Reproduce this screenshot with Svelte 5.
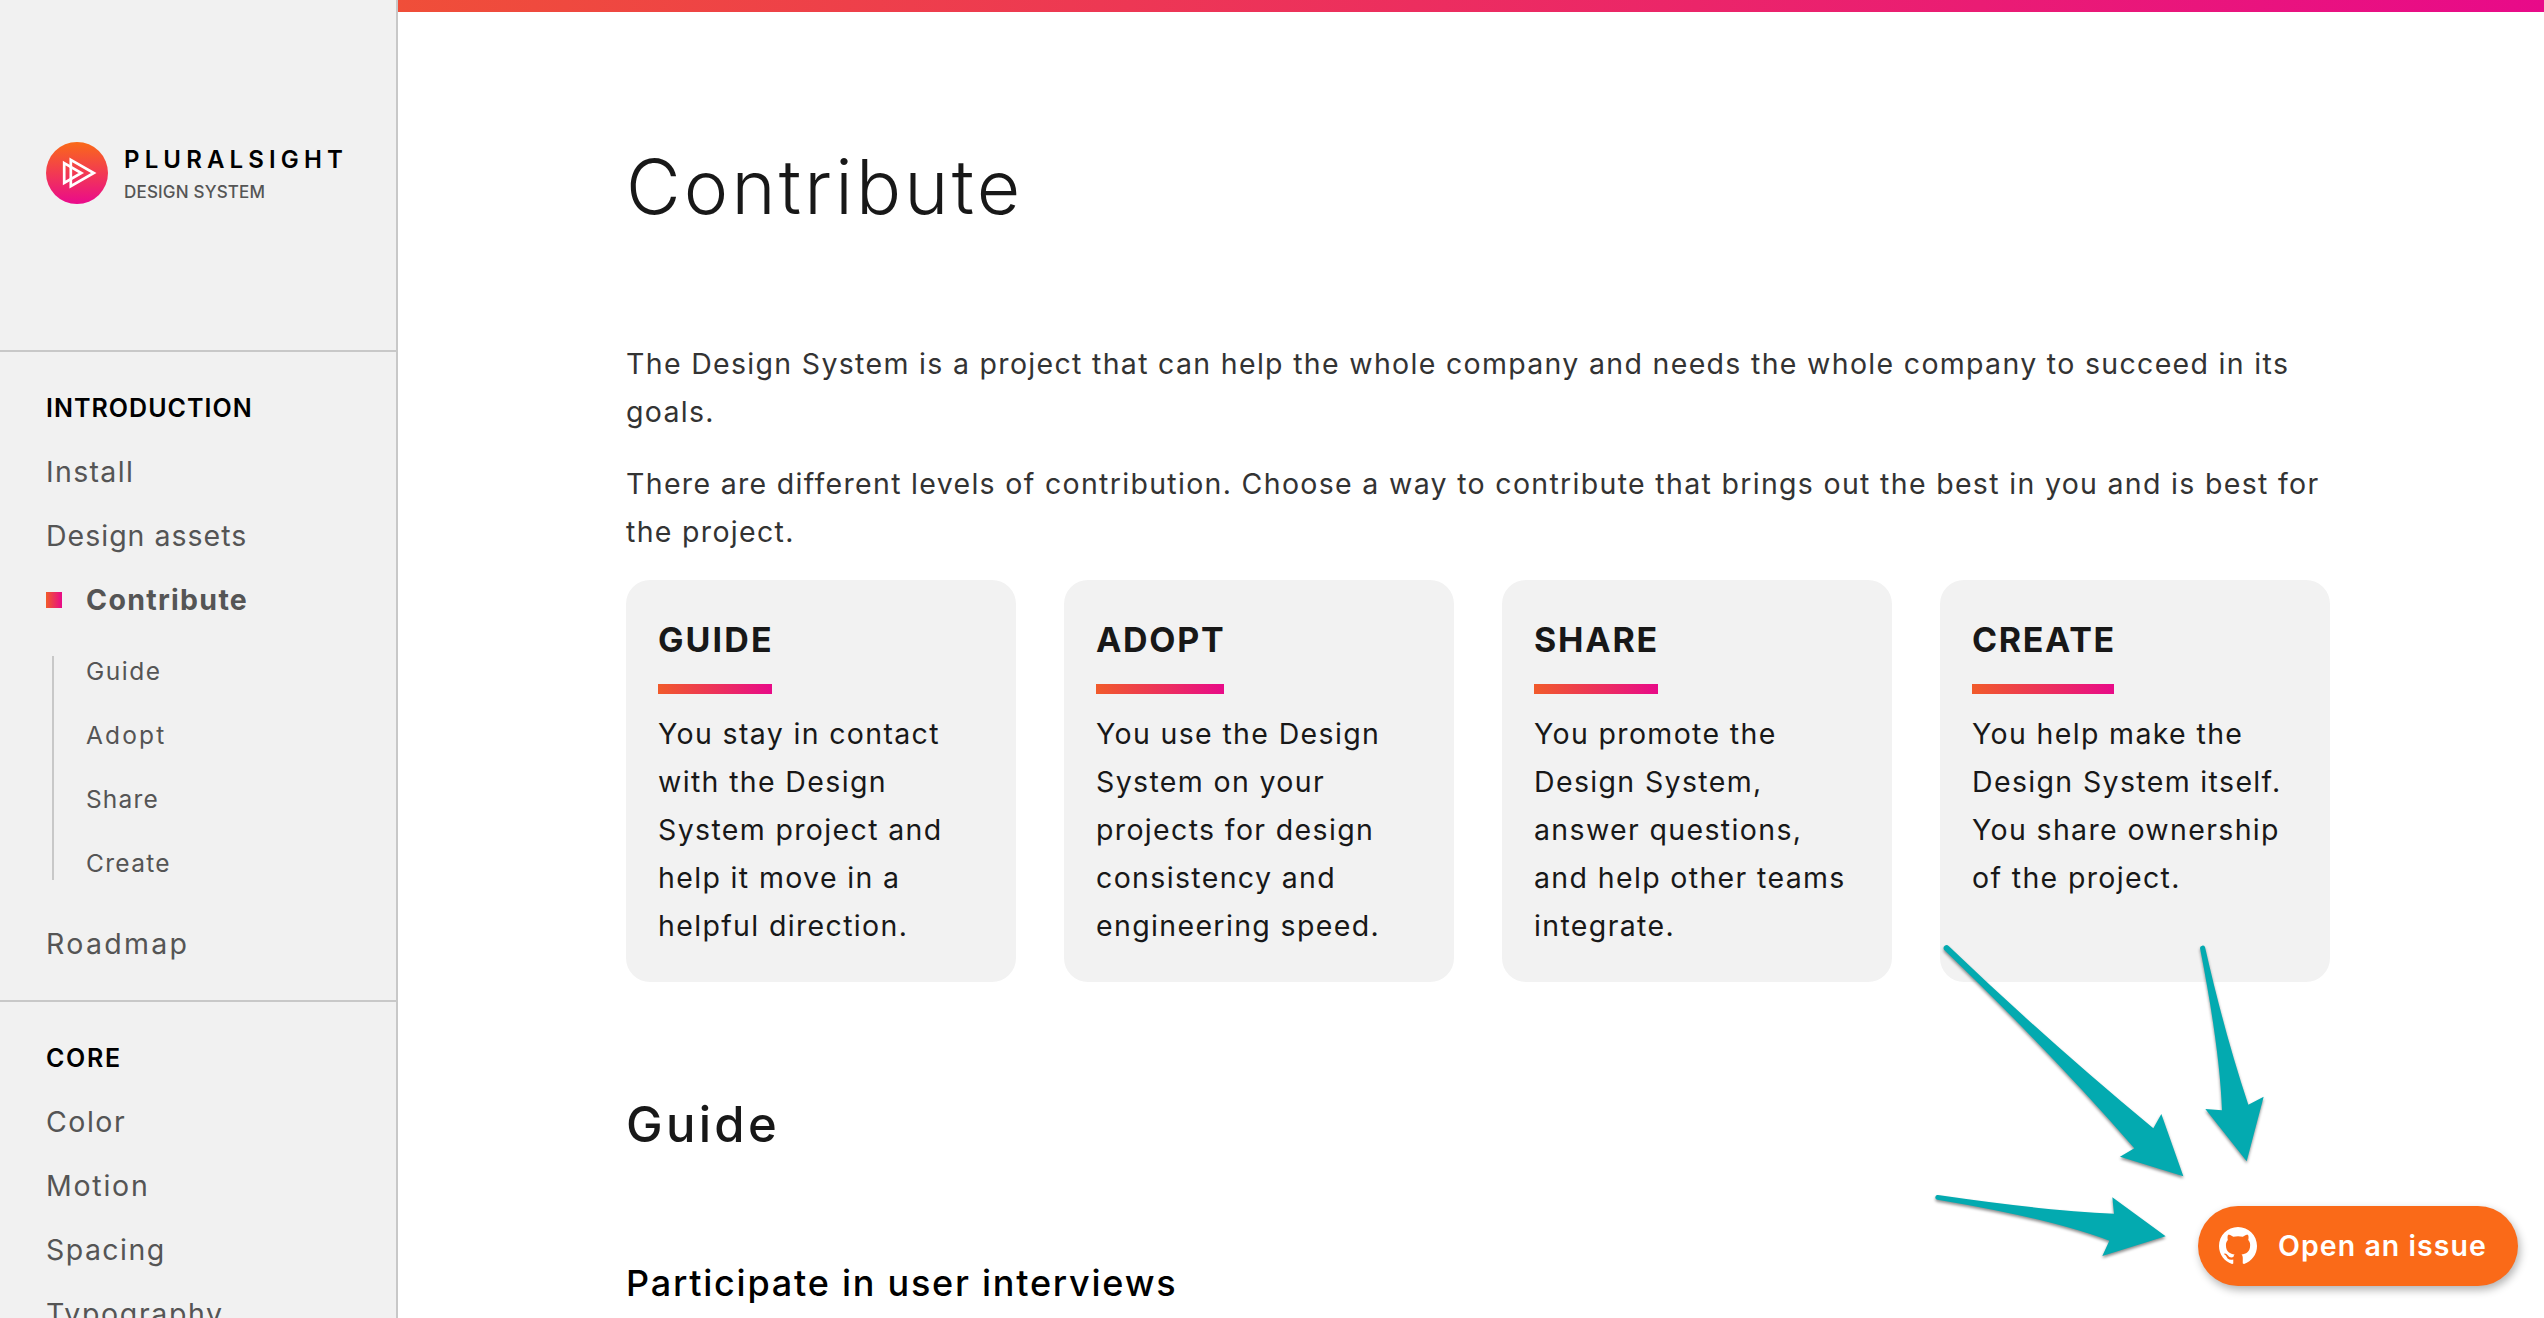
<script>
  // Navigation entries carry their own tracking (ls, in px).
  const intro = [
    { label: 'Install', ls: 1.34 },
    { label: 'Design assets', ls: 1.0 },
    {
      label: 'Contribute',
      ls: 1.3,
      active: true,
      children: [
        { label: 'Guide', ls: 1.5 },
        { label: 'Adopt', ls: 2.15 },
        { label: 'Share', ls: 1.15 },
        { label: 'Create', ls: 1.3 },
      ],
    },
    { label: 'Roadmap', ls: 2.3 },
  ];
  const core = [
    { label: 'Color', ls: 1.5 },
    { label: 'Motion', ls: 1.75 },
    { label: 'Spacing', ls: 1.45 },
    { label: 'Typography', ls: 1.65 },
  ];
  const sections = [
    { title: 'INTRODUCTION', ls: 1.03, items: intro },
    { title: 'CORE', ls: 1.65, items: core },
  ];
  const cards = [
    { title: 'GUIDE', ls: 2.1, text: 'You stay in contact with the Design System project and help it move in a helpful direction.' },
    { title: 'ADOPT', ls: 1.7, text: 'You use the Design System on your projects for design consistency and engineering speed.' },
    { title: 'SHARE', ls: 1.8, text: 'You promote the Design System, answer questions, and help other teams integrate.' },
    { title: 'CREATE', ls: 1.66, text: 'You help make the Design System itself. You share ownership of the project.' },
  ];
</script>

<div class="page">
  <aside>
    <header class="brand">
      <svg class="logo" viewBox="0 0 62 62" aria-hidden="true">
        <defs>
          <linearGradient id="disc" x1="0" y1="0" x2="0" y2="1">
            <stop offset="0" stop-color="#fa6a18" />
            <stop offset="1" stop-color="#ea0a8c" />
          </linearGradient>
        </defs>
        <circle cx="31" cy="31" r="31" fill="url(#disc)" />
        <g fill="none" stroke="#fff" stroke-width="2.7">
          <path d="M24.8 17.8 47.8 31 24.8 44.2Z" />
          <path d="M18.2 21.2 35.3 31 18.2 40.8Z" />
        </g>
      </svg>
      <div class="names">
        <span class="name">PLURALSIGHT</span>
        <span class="sub">DESIGN SYSTEM</span>
      </div>
    </header>
    {#each sections as section}
      <nav>
        <h4 style:letter-spacing="{section.ls}px">{section.title}</h4>
        {#each section.items as item}
          <a class="item" class:active={item.active} href="#top" style:letter-spacing="{item.ls}px">{item.label}</a>
          {#if item.children}
            <div class="children">
              {#each item.children as child}
                <a class="child" href="#top" style:letter-spacing="{child.ls}px">{child.label}</a>
              {/each}
            </div>
          {/if}
        {/each}
      </nav>
    {/each}
  </aside>

  <main>
    <div class="stripe"></div>
    <article>
      <h1>Contribute</h1>
      <p>The Design System is a project that can help the whole company and needs the whole company to succeed in its goals.</p>
      <p>There are different levels of contribution. Choose a way to contribute that brings out the best in you and is best for the project.</p>
      <div class="cards">
        {#each cards as card}
          <section class="card">
            <h3 style:letter-spacing="{card.ls}px"><span>{card.title}</span></h3>
            <div class="text">{card.text}</div>
          </section>
        {/each}
      </div>
      <h2>Guide</h2>
      <h5>Participate in user interviews</h5>
    </article>
  </main>

  <svg class="arrows" viewBox="0 0 1200 1080" aria-hidden="true">
    <path d="M146 78Q440 360 760 625L784 582 850 769 660 710 703 685Q460 405 132 89A9 9 0 0 1 146 78Z" />
    <path d="M915 81Q975 345 1045 554L1091 530 1040 724 916 567 966 571Q959 385 900 84A8 8 0 0 1 915 81Z" />
    <path d="M114 825Q450 874 642 881L637 832 797 949 607 1008 628 962Q450 895 112 839A7 7 0 0 1 114 825Z" />
  </svg>

  <button class="issue">
    <svg viewBox="0 0 16 16" aria-hidden="true">
      <path fill="#fff" d="M8 0C3.58 0 0 3.58 0 8c0 3.54 2.29 6.53 5.47 7.59.4.07.55-.17.55-.38 0-.19-.01-.82-.01-1.49-2.01.37-2.53-.49-2.69-.94-.09-.23-.48-.94-.82-1.13-.28-.15-.68-.52-.01-.53.63-.01 1.08.58 1.23.82.72 1.21 1.87.87 2.33.66.07-.52.28-.87.51-1.07-1.78-.2-3.64-.89-3.64-3.95 0-.87.31-1.59.82-2.15-.08-.2-.36-1.02.08-2.12 0 0 .67-.21 2.2.82.64-.18 1.32-.27 2-.27s1.36.09 2 .27c1.53-1.04 2.2-.82 2.2-.82.44 1.1.16 1.92.08 2.12.51.56.82 1.27.82 2.15 0 3.07-1.87 3.75-3.65 3.95.29.25.54.73.54 1.48 0 1.07-.01 1.93-.01 2.2 0 .21.15.46.55.38A8.01 8.01 0 0 0 16 8c0-4.42-3.58-8-8-8Z" />
    </svg>
    <span>Open an issue</span>
  </button>
</div>

<style>
  :global(body) {
    background: #fff;
    overflow: hidden;
  }
  .page {
    position: relative;
    display: flex;
    height: 1318px;
    overflow: hidden;
    font-family: Inter, 'Liberation Sans', sans-serif;
    color: #181818;
  }
  h1, h2, h3, h4, h5, p {
    margin: 0;
  }
  aside {
    box-sizing: border-box;
    width: 398px;
    flex: none;
    background: #f1f1f1;
    border-right: 2px solid #c8c8c8;
    overflow: hidden;
  }
  .brand {
    box-sizing: border-box;
    height: 352px;
    padding: 142px 0 0 46px;
    display: flex;
    align-items: flex-start;
    gap: 16px;
    border-bottom: 2px solid #c8c8c8;
  }
  .logo {
    width: 62px;
    height: 62px;
    flex: none;
  }
  .names {
    display: flex;
    flex-direction: column;
    white-space: nowrap;
  }
  .name {
    font-size: 24px;
    font-weight: 600;
    line-height: 36px;
    letter-spacing: 5.15px;
    color: #000;
  }
  .sub {
    font-size: 17px;
    font-weight: 500;
    line-height: 28px;
    letter-spacing: 0.18px;
    color: #555;
  }
  nav {
    padding: 23px 0 24px 46px;
    border-bottom: 2px solid #c8c8c8;
  }
  h4 {
    height: 65px;
    line-height: 66px;
    font-size: 25px;
    font-weight: 600;
    color: #000;
  }
  .item,
  .child {
    display: flex;
    align-items: center;
    line-height: 64px;
    color: #555;
    text-decoration: none;
  }
  .item {
    font-size: 28.5px;
  }
  .active {
    font-weight: 700;
  }
  .active::before {
    content: '';
    width: 16px;
    height: 16px;
    margin-right: 24px;
    background: linear-gradient(90deg, #f15b2a, #e80a89);
  }
  .children {
    margin: 7px 0 17px 6px;
    padding-left: 34px;
    background: linear-gradient(#c8c8c8, #c8c8c8) 0 17px / 2px 224px no-repeat;
  }
  .child {
    font-size: 24.5px;
  }
  main {
    flex: 1;
  }
  .stripe {
    height: 12px;
    background: linear-gradient(90deg, #f15b2a, #e80a89) right / 2544px 12px;
  }
  article {
    width: 1704px;
    padding: 131px 0 0 228px;
  }
  h1 {
    font-size: 75px;
    font-weight: 300;
    line-height: 88px;
    letter-spacing: 3.2px;
    margin-bottom: 109px;
  }
  p {
    font-size: 28.5px;
    line-height: 48px;
    letter-spacing: 1.315px;
    color: #333;
    margin-bottom: 24px;
  }
  .cards {
    display: grid;
    grid-template-columns: repeat(4, 1fr);
    gap: 48px;
    margin-top: 20px;
  }
  .card {
    box-sizing: border-box;
    height: 402px;
    padding: 32px;
    border-radius: 24px;
    background: #f2f2f2;
  }
  h3 {
    display: inline-block;
    font-size: 34px;
    font-weight: 700;
    line-height: 56px;
    padding-bottom: 16px;
    border-bottom: 10px solid;
    border-image: linear-gradient(90deg, #f15b2a, #e80a89) 1;
  }
  /* drops the tracking after the last letter so the rule ends with the word */
  h3 span {
    margin-right: -1.5px;
  }
  .text {
    font-size: 28.5px;
    line-height: 48px;
    letter-spacing: 1.35px;
    margin-top: 16px;
  }
  h2 {
    font-size: 49px;
    font-weight: 450;
    line-height: 64px;
    letter-spacing: 3.3px;
    margin-top: 111px;
  }
  h5 {
    font-size: 36px;
    font-weight: 450;
    line-height: 48px;
    letter-spacing: 1.76px;
    color: #000;
    margin-top: 102px;
  }
  .arrows {
    position: absolute;
    left: 1900px;
    top: 920px;
    width: 400px;
    height: 360px;
    fill: #03aab0;
    filter: drop-shadow(0 2px 1.5px rgba(0, 0, 0, 0.45));
  }
  .issue {
    position: absolute;
    right: 26px;
    bottom: 32px;
    box-sizing: border-box;
    width: 320px;
    height: 80px;
    padding: 0 0 1px 21px;
    display: flex;
    align-items: center;
    gap: 21px;
    border: 0;
    border-radius: 40px;
    background: #fa6a18;
    box-shadow: 2px 4px 8px rgba(0, 0, 0, 0.3);
    color: #fff;
    font: 600 28.5px Inter, 'Liberation Sans', sans-serif;
    letter-spacing: 1.05px;
    white-space: nowrap;
  }
  .issue svg {
    width: 38px;
    height: 38px;
  }
</style>
